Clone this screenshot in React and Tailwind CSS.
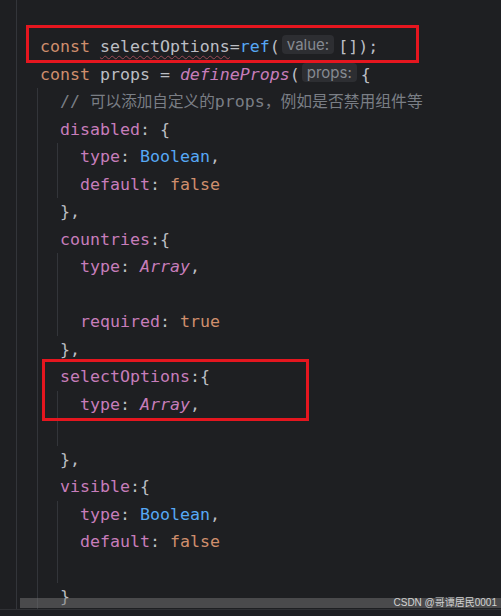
import React from "react";

const mono = { fontFamily: '"DejaVu Sans Mono", "Noto Sans CJK SC", monospace' };

function Line({ children }) {
  return <div className="h-[27.5px] leading-[27.5px] whitespace-pre">{children}</div>;
}

function Block({ children }) {
  return <div className="ml-[-3px] border-l border-[#33353a] pl-[22px]">{children}</div>;
}

const K = ({ children }) => <span className="text-[#cf8e6d]">{children}</span>;
const P = ({ children }) => <span className="text-[#c77dbb]">{children}</span>;
const B = ({ children }) => <span className="text-[#56a8f5]">{children}</span>;
const I = ({ children }) => <span className="italic text-[#c77dbb]">{children}</span>;

function Hint({ children }) {
  return (
    <span className="inline-flex items-center h-[19px] px-[5px] ml-[2px] mr-[4px] rounded-[4px] bg-[#2d2e32] text-[#868a91] text-[15px] leading-none align-[2px] font-['Inter',sans-serif]">
      {children}
    </span>
  );
}

export default function App() {
  return (
    <div className="relative w-[501px] h-[616px] bg-[#1e1f22] overflow-hidden text-[16.6px] text-[#bcbec4]" style={mono}>
      <div className="ml-[16px] h-[609px] border-l border-[#33353a] pt-[33px] pl-[23px] overflow-hidden">
        <Line>
          <K>const</K> <span className="underline decoration-wavy decoration-[#9c4a55] decoration-1 underline-offset-[3px]">selectOptions</span>=<B>ref</B>(<Hint>value:</Hint>[]);
        </Line>
        <Line>
          <K>const</K> props = <I>defineProps</I>(<Hint>props:</Hint>{"{"}
        </Line>
        <Block>
          <Line>
            <span className="text-[#7a7e85]">
              // <span className="text-[15.6px]">可以添加自定义的</span>props<span className="text-[15.8px]">，例如是否禁用组件等</span>
            </span>
          </Line>
          <Line>
            <P>disabled</P>: {"{"}
          </Line>
          <Block>
            <Line>
              <P>type</P>: <B>Boolean</B>,
            </Line>
            <Line>
              <P>default</P>: <K>false</K>
            </Line>
          </Block>
          <Line>{"},"}</Line>
          <Line>
            <P>countries</P>:{"{"}
          </Line>
          <Block>
            <Line>
              <P>type</P>: <I>Array</I>,
            </Line>
            <Line> </Line>
            <Line>
              <P>required</P>: <K>true</K>
            </Line>
          </Block>
          <Line>{"},"}</Line>
          <Line>
            <P>selectOptions</P>:{"{"}
          </Line>
          <Block>
            <Line>
              <P>type</P>: <I>Array</I>,
            </Line>
            <Line> </Line>
          </Block>
          <Line>{"},"}</Line>
          <Line>
            <P>visible</P>:{"{"}
          </Line>
          <Block>
            <Line>
              <P>type</P>: <B>Boolean</B>,
            </Line>
            <Line>
              <P>default</P>: <K>false</K>
            </Line>
            <Line> </Line>
          </Block>
          <Line>{"}"}</Line>
          <Line> </Line>
        </Block>
      </div>
      <div className="h-[7px] border-t border-[#2f3034] bg-[#1e1f22]" />

      {/* highlight boxes */}
      <div className="absolute left-[26px] top-[25px] w-[393px] h-[38px] border-[3px] border-[#e5161f]" />
      <div className="absolute left-[42px] top-[359px] w-[267px] h-[62px] border-[3px] border-[#e5161f]" />

      {/* horizontal scrollbar + watermark */}
      <div className="absolute left-[20px] top-[598px] w-[481px] h-[10px] bg-[#767676]/50 flex items-center justify-end pr-[4px]">
        <span className="text-[10px] leading-none text-[#d2d2d2] font-['Liberation_Sans','Noto_Sans_CJK_SC',sans-serif]">
          CSDN @哥谭居民0001
        </span>
      </div>
    </div>
  );
}
